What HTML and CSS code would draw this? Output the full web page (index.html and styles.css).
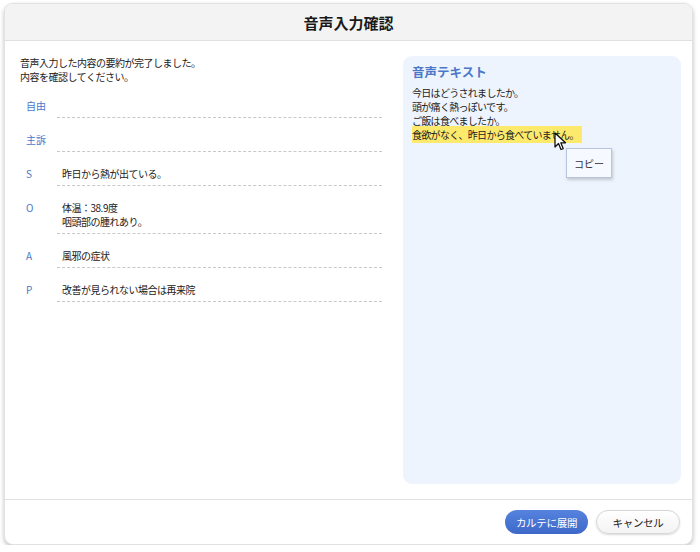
FILE: index.html
```html
<!DOCTYPE html>
<html lang="ja">
<head>
    <meta charset="UTF-8">
    <meta name="viewport" content="width=device-width, initial-scale=1.0">
    <title>音声入力確認</title>
    <link rel="stylesheet" href="styles.css">
</head>
<body>
    <div class="dialog">
        <header class="dialog-header">
            <h1>音声入力確認</h1>
        </header>

        <div class="dialog-body">
            <div class="summary">
                <p class="intro">音声入力した内容の要約が完了しました。<br>内容を確認してください。</p>

                <div class="row">
                    <div class="label">自由</div>
                    <div class="value"></div>
                </div>
                <div class="row">
                    <div class="label">主訴</div>
                    <div class="value"></div>
                </div>
                <div class="row">
                    <div class="label">S</div>
                    <div class="value">昨日から熱が出ている。</div>
                </div>
                <div class="row">
                    <div class="label">O</div>
                    <div class="value">体温：38.9度<br>咽頭部の腫れあり。</div>
                </div>
                <div class="row">
                    <div class="label">A</div>
                    <div class="value">風邪の症状</div>
                </div>
                <div class="row">
                    <div class="label">P</div>
                    <div class="value">改善が見られない場合は再来院</div>
                </div>
            </div>

            <div class="transcript">
                <h2>音声テキスト</h2>
                <p>今日はどうされましたか。</p>
                <p>頭が痛く熱っぽいです。</p>
                <p>ご飯は食べましたか。</p>
                <p><span class="selected">食欲がなく、昨日から食べていません。</span></p>

                <svg class="cursor" width="14" height="20" viewBox="0 0 14 20">
                    <path d="M1 1 L1 15 L4.5 11.5 L7 17.5 L9.2 16.6 L6.8 10.8 L11.5 10.8 Z" fill="#fff" stroke="#111" stroke-width="1.3" stroke-linejoin="round"/>
                </svg>
                <div class="copy-menu">コピー</div>
            </div>
        </div>

        <footer class="dialog-footer">
            <button class="btn btn-primary">カルテに展開</button>
            <button class="btn btn-secondary">キャンセル</button>
        </footer>
    </div>
</body>
</html>
```

FILE: styles.css
```css
body {
    margin: 0;
    padding: 0;
    background-color: #ffffff;
    font-family: "Noto Sans CJK JP", "Noto Sans", sans-serif;
    color: #222;
}

.dialog {
    width: 689px;
    height: 542px;
    margin: 3px 0 0 4px;
    background: white;
    border: 1px solid #e2e2e2;
    border-radius: 9px;
    box-shadow: 0 2px 4px rgba(0, 0, 0, 0.25);
    box-sizing: border-box;
    display: flex;
    flex-direction: column;
    overflow: hidden;
}

.dialog-header {
    height: 36px;
    background-color: #f3f3f3;
    border-bottom: 1px solid #e0e0e0;
    display: flex;
    align-items: center;
    justify-content: center;
    flex-shrink: 0;
}

.dialog-header h1 {
    font-size: 15px;
    font-weight: bold;
    margin: 0;
    color: #1a1a1a;
}

.dialog-body {
    flex: 1;
    display: flex;
    padding: 15px 11px 15px 15px;
    gap: 21px;
    min-height: 0;
}

.summary {
    width: 362px;
    flex-shrink: 0;
}

.intro {
    font-size: 10px;
    letter-spacing: -0.5px;
    line-height: 14px;
    margin: 0 0 15px 0;
}

.row {
    display: flex;
    font-size: 10px;
    letter-spacing: -0.5px;
    line-height: 14px;
    margin-bottom: 15px;
}

.label {
    width: 31px;
    padding-left: 6px;
    color: #4a78c8;
    flex-shrink: 0;
    letter-spacing: 0;
}

.value {
    flex: 1;
    min-height: 14px;
    padding: 0 0 4px 5px;
    border-bottom: 1px dashed #c8c8c8;
}

.transcript {
    flex: 1;
    position: relative;
    background-color: #eef4fd;
    border-radius: 9px;
    padding: 8px 9px;
}

.transcript h2 {
    font-size: 12.5px;
    font-weight: bold;
    line-height: 16px;
    color: #4a78c8;
    margin: 0 0 6px 0;
}

.transcript p {
    font-size: 10px;
    letter-spacing: -0.7px;
    line-height: 14px;
    margin: 0;
}

.selected {
    background-color: #fde96c;
    padding: 1px 3px 1px 0;
}

.cursor {
    position: absolute;
    left: 151px;
    top: 76px;
}

.copy-menu {
    position: absolute;
    left: 163px;
    top: 92px;
    width: 44px;
    height: 28px;
    background: #f6f9ff;
    border: 1px solid #b9c5e0;
    box-shadow: 1px 2px 3px rgba(0, 0, 0, 0.18);
    font-size: 10px;
    color: #333;
    display: flex;
    align-items: center;
    justify-content: center;
}

.dialog-footer {
    height: 44px;
    border-top: 1px solid #e2e2e2;
    display: flex;
    align-items: center;
    justify-content: flex-end;
    gap: 8px;
    padding-right: 12px;
    flex-shrink: 0;
}

.btn {
    height: 24px;
    border-radius: 12px;
    font-family: inherit;
    font-size: 10.5px;
    letter-spacing: -0.3px;
    cursor: pointer;
    padding: 0;
}

.btn-primary {
    width: 83px;
    background: linear-gradient(#5583de, #3d68c9);
    color: white;
    border: none;
}

.btn-secondary {
    width: 84px;
    background: linear-gradient(#ffffff, #f3f3f3);
    color: #222;
    border: 1px solid #d6d6d6;
    box-shadow: 0 1px 2px rgba(0, 0, 0, 0.15);
}
```
